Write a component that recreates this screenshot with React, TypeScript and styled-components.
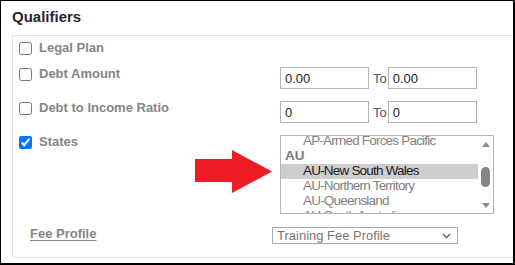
import React from "react";
import styled, { createGlobalStyle } from "styled-components";

const GlobalStyle = createGlobalStyle`
	html, body {
		margin: 0;
		padding: 0;
		background: #ffffff;
	}
	* {
		box-sizing: border-box;
	}
`;

const states = [
	{ label: "AP-Armed Forces Pacific", group: false, selected: false },
	{ label: "AU", group: true, selected: false },
	{ label: "AU-New South Wales", group: false, selected: true },
	{ label: "AU-Northern Territory", group: false, selected: false },
	{ label: "AU-Queensland", group: false, selected: false },
	{ label: "AU-South Australia", group: false, selected: false },
];

const App: React.FC = () => {
	return (
		<>
			<GlobalStyle />
			<Frame>
				<Title>Qualifiers</Title>
				<Panel>
					<Row>
						<LabelCell width={261}>
							<Check type="checkbox" />
							<LabelText>Legal Plan</LabelText>
						</LabelCell>
					</Row>
					<Row>
						<LabelCell width={261}>
							<Check type="checkbox" />
							<LabelText>Debt Amount</LabelText>
						</LabelCell>
						<Range>
							<TextInput defaultValue="0.00" />
							<ToText>To</ToText>
							<TextInput defaultValue="0.00" />
						</Range>
					</Row>
					<Row>
						<LabelCell width={261}>
							<Check type="checkbox" />
							<LabelText>Debt to Income Ratio</LabelText>
						</LabelCell>
						<Range>
							<TextInput defaultValue="0" />
							<ToText>To</ToText>
							<TextInput defaultValue="0" />
						</Range>
					</Row>
					<Row>
						<LabelCell width={261}>
							<Check type="checkbox" defaultChecked />
							<LabelText>States</LabelText>
						</LabelCell>
						<Listbox>
							<Options>
								{states.map((s, i) => (
									<OptionItem key={i} group={s.group} selected={s.selected}>
										{s.label}
									</OptionItem>
								))}
							</Options>
							<Scrollbar>
								<ArrowUp />
								<Track>
									<Thumb />
								</Track>
								<ArrowDown />
							</Scrollbar>
						</Listbox>
					</Row>
					<Row>
						<LabelCell width={253} indent={11}>
							<LinkText>Fee Profile</LinkText>
						</LabelCell>
						<SelectBox>
							<span>Training Fee Profile</span>
							<svg width="9" height="6" viewBox="0 0 9 6">
								<path d="M1 1 L4.5 4.5 L8 1" fill="none" stroke="#6b6b6b" strokeWidth="1.6" />
							</svg>
						</SelectBox>
					</Row>
				</Panel>
				<Pointer width="78" height="44" viewBox="0 0 78 44">
					<polygon points="0,9 37,9 37,0 77,21.5 37,43 37,32 0,32" fill="#ed1c24" />
				</Pointer>
			</Frame>
		</>
	);
};

export default App;

const Frame = styled.div`
	position: relative;
	width: 515px;
	height: 265px;
	border: 1px solid #000000;
	border-right-width: 2px;
	border-bottom-width: 2px;
	display: flex;
	flex-direction: column;
	font-family: "Liberation Sans", Arial, sans-serif;
	overflow: hidden;
`;

const Title = styled.div`
	padding: 7px 0 0 11px;
	margin-bottom: 9px;
	font-size: 15px;
	line-height: 18px;
	font-weight: 700;
	color: #2d1f2b;
`;

const Panel = styled.div`
	flex: 1;
	margin: 0 0 6px 11px;
	padding: 4px 0 13px 6px;
	border: 1px solid #e3e3e3;
	border-right: none;
	border-radius: 0 0 0 4px;
	display: flex;
	flex-direction: column;
	gap: 10px;
`;

const Row = styled.div`
	display: flex;
	flex-direction: row;
	align-items: flex-start;
`;

const LabelCell = styled.div<{ width: number; indent?: number }>`
	width: ${(p) => p.width}px;
	padding-left: ${(p) => p.indent || 0}px;
	height: 16px;
	display: flex;
	align-items: center;
	gap: 7px;
	flex-shrink: 0;
`;

const Check = styled.input`
	margin: 0;
	width: 13px;
	height: 13px;
`;

const LabelText = styled.span`
	font-size: 13px;
	line-height: 16px;
	font-weight: 700;
	color: #858585;
`;

const LinkText = styled(LabelText)`
	text-decoration: underline;
	text-underline-offset: 2px;
`;

const Range = styled.div`
	margin: 1px 0;
	display: flex;
	align-items: center;
`;

const TextInput = styled.input`
	width: 89px;
	height: 22px;
	margin: 0;
	padding: 0 4px;
	border: 1px solid #b5b5b5;
	border-radius: 0;
	font-family: "Liberation Sans", Arial, sans-serif;
	font-size: 13px;
	color: #222222;
	outline: none;
`;

const ToText = styled.span`
	margin: 0 1px 0 4px;
	font-size: 13px;
	color: #555555;
`;

const Listbox = styled.div`
	margin: 1px 0 2px;
	width: 214px;
	height: 79px;
	border: 1px solid #b5b5b5;
	display: flex;
	flex-direction: row;
	overflow: hidden;
`;

const Options = styled.div`
	flex: 1;
	margin-top: -2px;
	display: flex;
	flex-direction: column;
	overflow: hidden;
`;

const OptionItem = styled.div<{ group: boolean; selected: boolean }>`
	height: 15px;
	flex-shrink: 0;
	line-height: 14px;
	padding-left: ${(p) => (p.group ? 4 : 22)}px;
	font-size: 13.5px;
	letter-spacing: ${(p) => (p.group ? 0 : -0.8)}px;
	font-weight: ${(p) => (p.group ? 700 : 400)};
	white-space: nowrap;
	color: ${(p) => (p.selected ? "#1a1a1a" : p.group ? "#7a7a7a" : "#828282")};
	background: ${(p) => (p.selected ? "#cecece" : "transparent")};
`;

const Scrollbar = styled.div`
	width: 15px;
	flex-shrink: 0;
	display: flex;
	flex-direction: column;
	align-items: center;
	padding: 6px 0 5px;
`;

const ArrowUp = styled.div`
	width: 0;
	height: 0;
	border-left: 4.5px solid transparent;
	border-right: 4.5px solid transparent;
	border-bottom: 5px solid #8e8e8e;
`;

const ArrowDown = styled.div`
	width: 0;
	height: 0;
	border-left: 4.5px solid transparent;
	border-right: 4.5px solid transparent;
	border-top: 5px solid #8e8e8e;
`;

const Track = styled.div`
	flex: 1;
	display: flex;
	flex-direction: column;
	align-items: center;
`;

const Thumb = styled.div`
	margin-top: 20px;
	width: 9px;
	height: 20px;
	border-radius: 4.5px;
	background: #858585;
`;

const SelectBox = styled.div`
	margin-top: 1px;
	width: 186px;
	height: 17px;
	padding: 0 6px 0 4px;
	border: 1px solid #ababab;
	display: flex;
	align-items: center;
	justify-content: space-between;
	font-size: 13px;
	color: #777777;
`;

const Pointer = styled.svg`
	position: absolute;
	left: 194px;
	top: 149px;
`;
